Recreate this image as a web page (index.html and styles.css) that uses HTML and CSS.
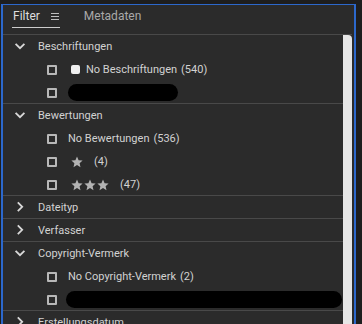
FILE: index.html
```html
<!DOCTYPE html>
<html lang="de">
<head>
  <meta charset="UTF-8">
  <meta name="viewport" content="width=device-width, initial-scale=1.0">
  <title>Filter</title>
  <link rel="stylesheet" href="styles.css">
</head>
<body>
  <div class="panel">
    <div class="tabs">
      <div class="tab active">
        <span>Filter</span>
        <svg class="menu-icon" width="8" height="7" viewBox="0 0 8 7">
          <path d="M0 0.5H8M0 3.5H8M0 6.5H8" stroke="#bdbdbd" stroke-width="1"/>
        </svg>
      </div>
      <div class="tab">Metadaten</div>
    </div>

    <div class="content">
      <div class="list">
        <!-- Beschriftungen -->
        <div class="group">
          <div class="group-head">
            <svg class="chevron" width="12" height="12" viewBox="0 0 12 12"><path d="M1.6 3.8L6 8.2L10.4 3.8"/></svg>
            <span class="group-title">Beschriftungen</span>
          </div>
          <div class="item">
            <span class="check"></span>
            <span class="swatch"></span>
            <span>No Beschriftungen</span><span class="count">(540)</span>
          </div>
          <div class="item">
            <span class="check"></span>
            <span class="pill pill-short"></span>
          </div>
        </div>

        <!-- Bewertungen -->
        <div class="group">
          <div class="group-head">
            <svg class="chevron" width="12" height="12" viewBox="0 0 12 12"><path d="M1.6 3.8L6 8.2L10.4 3.8"/></svg>
            <span class="group-title">Bewertungen</span>
          </div>
          <div class="item">
            <span class="check"></span>
            <span>No Bewertungen</span><span class="count">(536)</span>
          </div>
          <div class="item">
            <span class="check"></span>
            <span class="stars">
              <svg viewBox="0 0 12 12"><path d="M6 0.6L7.6 4.3L11.6 4.6L8.6 7.2L9.5 11.2L6 9.1L2.5 11.2L3.4 7.2L0.4 4.6L4.4 4.3Z"/></svg>
            </span>
            <span class="star-count">(4)</span>
          </div>
          <div class="item">
            <span class="check"></span>
            <span class="stars">
              <svg viewBox="0 0 12 12"><path d="M6 0.6L7.6 4.3L11.6 4.6L8.6 7.2L9.5 11.2L6 9.1L2.5 11.2L3.4 7.2L0.4 4.6L4.4 4.3Z"/></svg>
              <svg viewBox="0 0 12 12"><path d="M6 0.6L7.6 4.3L11.6 4.6L8.6 7.2L9.5 11.2L6 9.1L2.5 11.2L3.4 7.2L0.4 4.6L4.4 4.3Z"/></svg>
              <svg viewBox="0 0 12 12"><path d="M6 0.6L7.6 4.3L11.6 4.6L8.6 7.2L9.5 11.2L6 9.1L2.5 11.2L3.4 7.2L0.4 4.6L4.4 4.3Z"/></svg>
            </span>
            <span class="star-count">(47)</span>
          </div>
        </div>

        <!-- collapsed -->
        <div class="group">
          <div class="group-head">
            <svg class="chevron" width="12" height="12" viewBox="0 0 12 12"><path d="M3.8 1.4L8.2 5.8L3.8 10.2"/></svg>
            <span class="group-title">Dateityp</span>
          </div>
        </div>
        <div class="group">
          <div class="group-head">
            <svg class="chevron" width="12" height="12" viewBox="0 0 12 12"><path d="M3.8 1.4L8.2 5.8L3.8 10.2"/></svg>
            <span class="group-title">Verfasser</span>
          </div>
        </div>

        <!-- Copyright-Vermerk -->
        <div class="group">
          <div class="group-head">
            <svg class="chevron" width="12" height="12" viewBox="0 0 12 12"><path d="M1.6 3.8L6 8.2L10.4 3.8"/></svg>
            <span class="group-title">Copyright-Vermerk</span>
          </div>
          <div class="item">
            <span class="check"></span>
            <span>No Copyright-Vermerk</span><span class="count">(2)</span>
          </div>
          <div class="item">
            <span class="check"></span>
            <span class="pill pill-wide"></span>
          </div>
        </div>

        <div class="group">
          <div class="group-head">
            <svg class="chevron" width="12" height="12" viewBox="0 0 12 12"><path d="M3.8 1.4L8.2 5.8L3.8 10.2"/></svg>
            <span class="group-title">Erstellungsdatum</span>
          </div>
        </div>
      </div>
      <div class="scrollbar"></div>
    </div>
  </div>
</body>
</html>
```
FILE: styles.css
```css
:root {
  --outer-bg: #1e1e1e;
  --panel-bg: #2b2b2b;
  --focus-color: #2c68cc;
  --line-color: #494949;
  --text-color: #d2d2d2;
  --muted-text: #a9a9a9;
  --check-color: #b8b8b8;
  --star-color: #b3b3b3;
  --scroll-color: #e6e6e6;
}
html, body {
  margin: 0;
  height: 324px;
  overflow: hidden;
}
body {
  background-color: var(--outer-bg);
  padding: 4px 6px 0 1px;
  box-sizing: border-box;
  font-family: Roboto, "Liberation Sans", sans-serif;
  font-size: 11px;
  color: var(--text-color);
}
.panel {
  height: 330px;
  background-color: var(--panel-bg);
  border-top: 1px solid var(--focus-color);
  border-left: 2px solid var(--focus-color);
  border-right: 2px solid var(--focus-color);
  display: flex;
  flex-direction: column;
}
.tabs {
  display: flex;
  align-items: flex-start;
  height: 29px;
  padding-left: 9px;
  margin-right: 2px;
  border-bottom: 1px solid var(--line-color);
  font-size: 12px;
  line-height: 15px;
}
.tab {
  display: flex;
  align-items: center;
  padding: 4px 1px 3px 1px;
  color: var(--muted-text);
}
.tab.active {
  gap: 11px;
  color: #dedede;
  border-bottom: 1px solid #cdcdcd;
}
.tab + .tab {
  margin-left: 23px;
}
.content {
  flex: 1;
  display: flex;
  margin-right: 2px;
}
.list {
  flex: 1;
}
.scrollbar {
  width: 9px;
  background-color: var(--scroll-color);
  border-top-right-radius: 4px;
}
.group {
  border-bottom: 1px solid var(--line-color);
}
.group-head {
  height: 22px;
  display: flex;
  align-items: center;
  padding-left: 11px;
}
.chevron {
  flex: none;
}
.chevron path {
  fill: none;
  stroke: #d8d8d8;
  stroke-width: 1.8;
}
.group-title {
  margin-left: 12px;
}
.item {
  height: 23px;
  box-sizing: border-box;
  padding: 2px 0 0 44px;
  display: flex;
  align-items: center;
  white-space: nowrap;
}
.check {
  flex: none;
  width: 10px;
  height: 10px;
  box-sizing: border-box;
  border: 2px solid var(--check-color);
  border-radius: 1px;
  margin-right: 11px;
}
.swatch {
  flex: none;
  width: 9px;
  height: 9px;
  margin: 0 6px 0 3px;
  background-color: #efefef;
  border-radius: 2px;
}
.count {
  margin-left: 4px;
}
.stars {
  display: flex;
  gap: 1px;
  margin-left: 3px;
}
.stars svg {
  width: 12px;
  height: 12px;
  fill: var(--star-color);
}
.star-count {
  margin-left: 11px;
}
.pill {
  height: 17px;
  background-color: #000;
  border-radius: 9px;
}
.pill-short {
  width: 110px;
}
.pill-wide {
  flex: 1;
  margin: 0 1px 0 -2px;
}
```
